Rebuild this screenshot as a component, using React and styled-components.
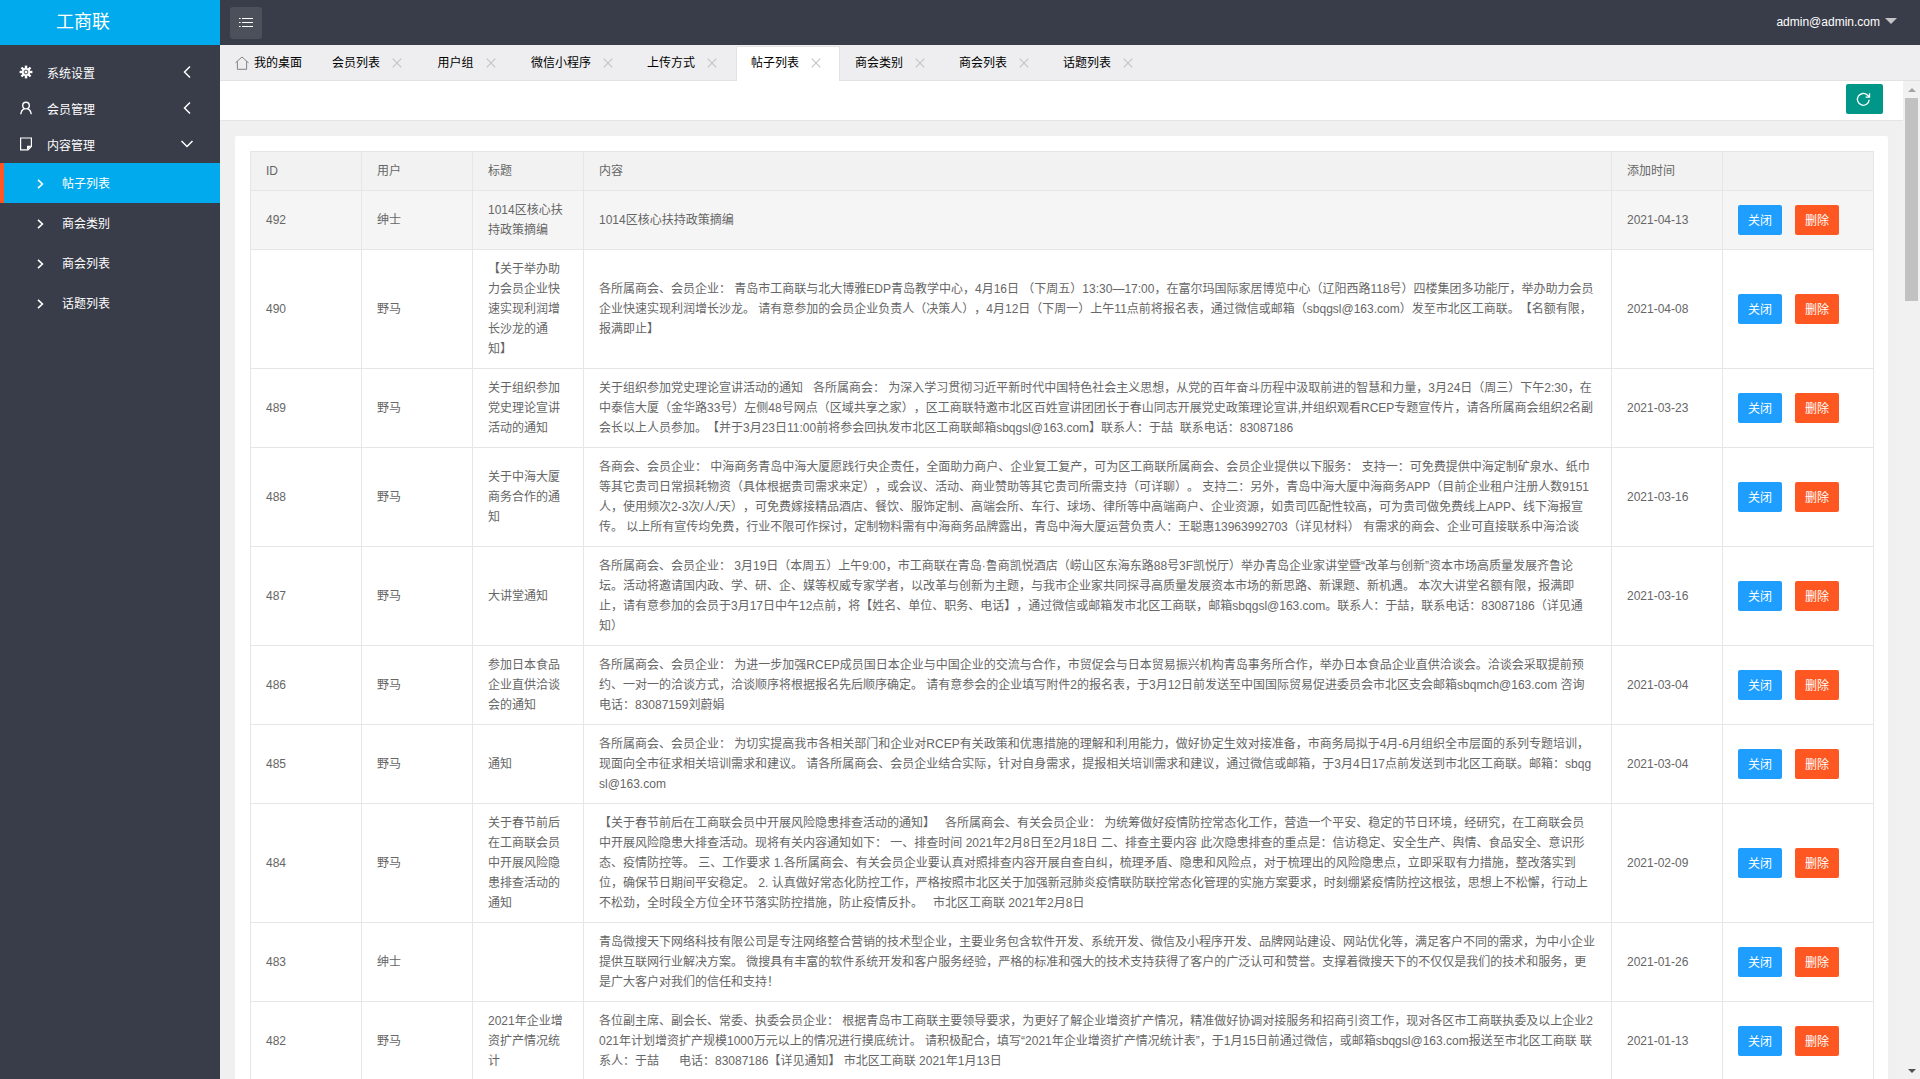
import React, { useState } from 'react';
import styled, { createGlobalStyle } from 'styled-components';

const GlobalStyle = createGlobalStyle`
  * {
    box-sizing: border-box;
  }

  body {
    margin: 0;
    overflow: hidden;
    font-family: "Liberation Sans", "Noto Sans CJK SC", sans-serif;
    font-size: 12px;
    line-height: 20px;
    color: #666;
    text-spacing-trim: space-all;
  }

  button {
    font-family: inherit;
    font-size: 12px;
    border: none;
    padding: 0;
    cursor: pointer;
  }

  a {
    color: inherit;
    text-decoration: none;
  }

  ul {
    list-style: none;
    margin: 0;
    padding: 0;
  }
`;

const Layout = styled.div`
  display: flex;
  height: 100vh;
`;

const Sidebar = styled.aside`
  flex: 0 0 220px;
  background: #393d49;
  color: #fff;
`;

const Logo = styled.a`
  display: block;
  height: 45px;
  line-height: 45px;
  padding-left: 56px;
  background: #01aaed;
  font-size: 18px;
`;

const Nav = styled.nav`
  padding-top: 10px;
`;

const NavItem = styled.button`
  display: flex;
  align-items: center;
  width: 100%;
  height: 36px;
  padding: 0 26px 2px 18px;
  background: none;
  color: #fff;
  text-align: left;

  span {
    flex: 1;
    margin-left: 13px;
  }
`;

const SubItem = styled.a`
  display: flex;
  align-items: center;
  height: 40px;
  padding: 2px 0 0 30px;
  border-left: 4px solid ${props => (props.$active ? '#ff5722' : 'transparent')};
  background: ${props => (props.$active ? '#01aaed' : 'transparent')};

  span {
    margin-left: 14px;
  }
`;

const Main = styled.div`
  flex: 1;
  min-width: 0;
  display: flex;
  flex-direction: column;
`;

const Header = styled.header`
  flex: 0 0 45px;
  display: flex;
  align-items: center;
  justify-content: space-between;
  padding: 0 23px 0 10px;
  background: #393d49;
`;

const ToggleButton = styled.button`
  display: flex;
  align-items: center;
  justify-content: center;
  width: 32px;
  height: 32px;
  border-radius: 3px;
  background: #4c505b;
`;

const UserButton = styled.button`
  display: flex;
  align-items: center;
  gap: 5px;
  padding-bottom: 2px;
  background: none;
  color: #fff;
`;

const Caret = styled.i`
  border: 6px solid transparent;
  border-top-color: #c4c5c8;
  border-bottom-width: 0;
  margin-bottom: 2px;
`;

const TabBar = styled.ul`
  flex: 0 0 36px;
  display: flex;
  background: #eeeef0;
  border-bottom: 1px solid #e2e2e2;
`;

const Tab = styled.li`
  display: flex;
  align-items: center;
  justify-content: center;
  min-width: 95px;
  height: 35px;
  margin: 1px 0 -1px;
  padding: 0 14px 2px;
  border: 1px solid ${props => (props.$active ? '#e2e2e2' : 'transparent')};
  border-bottom: none;
  border-radius: 2px 2px 0 0;
  background: ${props => (props.$active ? '#fff' : 'transparent')};
  color: #000;
`;

const TabLink = styled.a`
  display: flex;
  align-items: center;
  gap: 5px;
`;

const CloseButton = styled.button`
  display: flex;
  align-items: center;
  justify-content: center;
  width: 18px;
  height: 18px;
  margin-left: 8px;
  background: none;
`;

const Frame = styled.div`
  flex: 1;
  min-height: 0;
  display: flex;
`;

const Page = styled.div`
  flex: 1;
  min-width: 0;
  overflow: hidden;
  background: #f0f0f0;
`;

const Toolbar = styled.div`
  display: flex;
  justify-content: flex-end;
  height: 40px;
  padding: 3px 20px 0;
  background: #fff;
  border-bottom: 1px solid #e5e5e5;
`;

const RefreshButton = styled.button`
  display: flex;
  align-items: center;
  width: 37px;
  height: 30px;
  padding-left: 10px;
  border-radius: 2px;
  background: #009688;
`;

const Card = styled.section`
  margin: 15px;
  padding: 15px 14px 15px 15px;
  border-radius: 2px;
  background: #fff;
`;

const Table = styled.table`
  width: 100%;
  table-layout: fixed;
  border-collapse: collapse;

  th,
  td {
    padding: 9px 15px;
    border: 1px solid #e6e6e6;
    font-weight: 400;
    text-align: left;
    word-break: break-all;
    white-space: pre-wrap;
  }

  thead tr {
    background: #f2f2f2;
  }
`;

const Col = styled.col`
  width: ${props => props.$width || 'auto'};
`;

const Row = styled.tr`
  background: ${props => (props.$hover ? '#f5f5f5' : '#fff')};
`;

const Actions = styled.div`
  display: flex;
  gap: 13px;
  margin: -5px 0;
`;

const ActionButton = styled.button`
  width: 44px;
  height: 30px;
  padding-bottom: 2px;
  border-radius: 2px;
  background: ${props => (props.$danger ? '#ff5722' : '#1e9fff')};
  color: #fff;
`;

const ScrollBar = styled.div`
  flex: 0 0 17px;
  display: flex;
  flex-direction: column;
  align-items: center;
  background: #f1f1f1;
`;

const ScrollArrow = styled.span`
  display: flex;
  align-items: center;
  justify-content: center;
  width: 17px;
  height: 17px;

  i {
    border: 4px solid transparent;
    ${props =>
      props.$up
        ? 'border-top-width: 0; border-bottom-color: #a3a3a3;'
        : 'border-bottom-width: 0; border-top-color: #505050;'}
  }
`;

const ScrollTrack = styled.div`
  flex: 1;
`;

const ScrollThumb = styled.div`
  width: 13px;
  height: 203px;
  background: #c1c1c1;
`;

const Stroke = ({ d, size = 14, color = '#fff', width = 1.2 }) => (
  <svg width={size} height={size} viewBox="0 0 14 14" fill="none" stroke={color} strokeWidth={width} aria-hidden="true">
    <path d={d} />
  </svg>
);

const GearIcon = () => (
  <svg width="16" height="16" viewBox="0 0 16 16" aria-hidden="true">
    <g fill="#fff">
      <rect x="6.8" y="1.6" width="2.4" height="12.8" />
      <rect x="6.8" y="1.6" width="2.4" height="12.8" transform="rotate(45 8 8)" />
      <rect x="6.8" y="1.6" width="2.4" height="12.8" transform="rotate(90 8 8)" />
      <rect x="6.8" y="1.6" width="2.4" height="12.8" transform="rotate(135 8 8)" />
      <circle cx="8" cy="8" r="4.1" />
    </g>
    <circle cx="8" cy="8" r="1.9" fill="#fff" stroke="#393d49" strokeWidth="0.9" />
  </svg>
);

const UserIcon = () => (
  <svg width="16" height="16" viewBox="0 0 16 16" fill="none" stroke="#fff" strokeWidth="1.4" aria-hidden="true">
    <circle cx="8" cy="5.6" r="3.3" />
    <path d="M6.6 8.6C4.4 9.5 3 11.5 2.8 14.3M9.4 8.6c2.2.9 3.6 2.9 3.8 5.7" />
  </svg>
);

const NoteIcon = () => (
  <svg width="16" height="16" viewBox="0 0 16 16" aria-hidden="true">
    <path d="M2.6 2h10.8v8.6L10 13.9H2.6z" fill="none" stroke="#fff" strokeWidth="1.2" />
    <path d="M9 9.8h4.6L9 14.2z" fill="#fff" />
  </svg>
);

const ListIcon = () => (
  <svg width="16" height="16" viewBox="0 0 16 16" stroke="#fff" strokeWidth="1" aria-hidden="true">
    <path d="M1 3.5h1.6M4 3.5h11M1 7.5h1.6M4 7.5h11M1 11.5h1.6M4 11.5h11" />
  </svg>
);

const HomeIcon = () => (
  <Stroke d="M0.5 6.8 7 1l6.5 5.8M2.4 5.4v7.9h9.2V5.4" color="#777" width={0.9} />
);

const RefreshIcon = () => (
  <svg width="15" height="15" viewBox="0 0 15 15" fill="none" stroke="#fff" strokeWidth="1.3" aria-hidden="true">
    <path d="M13.2 7.8A5.9 5.9 0 1 1 11.6 3.3l1.6 1.5" />
    <path d="M13.5 1.2v3.9H9.6" />
  </svg>
);

const menus = [
  { label: '系统设置', icon: <GearIcon /> },
  { label: '会员管理', icon: <UserIcon /> },
  { label: '内容管理', icon: <NoteIcon />, open: true },
];

const subMenus = ['帖子列表', '商会类别', '商会列表', '话题列表'];

const tabs = ['会员列表', '用户组', '微信小程序', '上传方式', '帖子列表', '商会类别', '商会列表', '话题列表'];

const posts = [
  {
    id: 492,
    user: '绅士',
    title: '1014区核心扶持政策摘编',
    content: '1014区核心扶持政策摘编',
    date: '2021-04-13',
  },
  {
    id: 490,
    user: '野马',
    title: '【关于举办助力会员企业快速实现利润增长沙龙的通知】',
    content:
      '各所属商会、会员企业： 青岛市工商联与北大博雅EDP青岛教学中心，4月16日 （下周五）13:30—17:00，在富尔玛国际家居博览中心（辽阳西路118号）四楼集团多功能厅，举办助力会员企业快速实现利润增长沙龙。 请有意参加的会员企业负责人（决策人），4月12日（下周一）上午11点前将报名表，通过微信或邮箱（sbqgsl@163.com）发至市北区工商联。【名额有限，报满即止】',
    date: '2021-04-08',
  },
  {
    id: 489,
    user: '野马',
    title: '关于组织参加党史理论宣讲活动的通知',
    content:
      '关于组织参加党史理论宣讲活动的通知   各所属商会： 为深入学习贯彻习近平新时代中国特色社会主义思想，从党的百年奋斗历程中汲取前进的智慧和力量，3月24日（周三）下午2:30，在中泰信大厦（金华路33号）左侧48号网点（区域共享之家），区工商联特邀市北区百姓宣讲团团长于春山同志开展党史政策理论宣讲,并组织观看RCEP专题宣传片，请各所属商会组织2名副会长以上人员参加。【并于3月23日11:00前将参会回执发市北区工商联邮箱sbqgsl@163.com】联系人：于喆  联系电话：83087186',
    date: '2021-03-23',
  },
  {
    id: 488,
    user: '野马',
    title: '关于中海大厦商务合作的通知',
    content:
      '各商会、会员企业： 中海商务青岛中海大厦愿践行央企责任，全面助力商户、企业复工复产，可为区工商联所属商会、会员企业提供以下服务： 支持一：可免费提供中海定制矿泉水、纸巾等其它贵司日常损耗物资（具体根据贵司需求来定），或会议、活动、商业赞助等其它贵司所需支持（可详聊）。 支持二：另外，青岛中海大厦中海商务APP（目前企业租户注册人数9151人，使用频次2-3次/人/天），可免费嫁接精品酒店、餐饮、服饰定制、高端会所、车行、球场、律所等中高端商户、企业资源，如贵司匹配性较高，可为贵司做免费线上APP、线下海报宣传。 以上所有宣传均免费，行业不限可作探讨，定制物料需有中海商务品牌露出，青岛中海大厦运营负责人：王聪惠13963992703（详见材料） 有需求的商会、企业可直接联系中海洽谈',
    date: '2021-03-16',
  },
  {
    id: 487,
    user: '野马',
    title: '大讲堂通知',
    content:
      '各所属商会、会员企业： 3月19日（本周五）上午9:00，市工商联在青岛·鲁商凯悦酒店（崂山区东海东路88号3F凯悦厅）举办青岛企业家讲堂暨“改革与创新”资本市场高质量发展齐鲁论坛。活动将邀请国内政、学、研、企、媒等权威专家学者，以改革与创新为主题，与我市企业家共同探寻高质量发展资本市场的新思路、新课题、新机遇。 本次大讲堂名额有限，报满即止，请有意参加的会员于3月17日中午12点前，将【姓名、单位、职务、电话】，通过微信或邮箱发市北区工商联，邮箱sbqgsl@163.com。联系人：于喆，联系电话：83087186（详见通知）',
    date: '2021-03-16',
  },
  {
    id: 486,
    user: '野马',
    title: '参加日本食品企业直供洽谈会的通知',
    content:
      '各所属商会、会员企业： 为进一步加强RCEP成员国日本企业与中国企业的交流与合作，市贸促会与日本贸易振兴机构青岛事务所合作，举办日本食品企业直供洽谈会。洽谈会采取提前预约、一对一的洽谈方式，洽谈顺序将根据报名先后顺序确定。 请有意参会的企业填写附件2的报名表，于3月12日前发送至中国国际贸易促进委员会市北区支会邮箱sbqmch@163.com 咨询电话：83087159刘蔚娟',
    date: '2021-03-04',
  },
  {
    id: 485,
    user: '野马',
    title: '通知',
    content:
      '各所属商会、会员企业： 为切实提高我市各相关部门和企业对RCEP有关政策和优惠措施的理解和利用能力，做好协定生效对接准备，市商务局拟于4月-6月组织全市层面的系列专题培训，现面向全市征求相关培训需求和建议。 请各所属商会、会员企业结合实际，针对自身需求，提报相关培训需求和建议，通过微信或邮箱，于3月4日17点前发送到市北区工商联。邮箱：sbqgsl@163.com',
    date: '2021-03-04',
  },
  {
    id: 484,
    user: '野马',
    title: '关于春节前后在工商联会员中开展风险隐患排查活动的通知',
    content:
      '【关于春节前后在工商联会员中开展风险隐患排查活动的通知】   各所属商会、有关会员企业： 为统筹做好疫情防控常态化工作，营造一个平安、稳定的节日环境，经研究，在工商联会员中开展风险隐患大排查活动。现将有关内容通知如下： 一、排查时间 2021年2月8日至2月18日 二、排查主要内容 此次隐患排查的重点是：信访稳定、安全生产、舆情、食品安全、意识形态、疫情防控等。 三、工作要求 1.各所属商会、有关会员企业要认真对照排查内容开展自查自纠，梳理矛盾、隐患和风险点，对于梳理出的风险隐患点，立即采取有力措施，整改落实到位，确保节日期间平安稳定。 2. 认真做好常态化防控工作，严格按照市北区关于加强新冠肺炎疫情联防联控常态化管理的实施方案要求，时刻绷紧疫情防控这根弦，思想上不松懈，行动上不松劲，全时段全方位全环节落实防控措施，防止疫情反扑。   市北区工商联 2021年2月8日',
    date: '2021-02-09',
  },
  {
    id: 483,
    user: '绅士',
    title: '',
    content:
      '青岛微搜天下网络科技有限公司是专注网络整合营销的技术型企业，主要业务包含软件开发、系统开发、微信及小程序开发、品牌网站建设、网站优化等，满足客户不同的需求，为中小企业提供互联网行业解决方案。 微搜具有丰富的软件系统开发和客户服务经验，严格的标准和强大的技术支持获得了客户的广泛认可和赞誉。支撑着微搜天下的不仅仅是我们的技术和服务，更是广大客户对我们的信任和支持！',
    date: '2021-01-26',
  },
  {
    id: 482,
    user: '野马',
    title: '2021年企业增资扩产情况统计',
    content:
      '各位副主席、副会长、常委、执委会员企业： 根据青岛市工商联主要领导要求，为更好了解企业增资扩产情况，精准做好协调对接服务和招商引资工作，现对各区市工商联执委及以上企业2021年计划增资扩产规模1000万元以上的情况进行摸底统计。 请积极配合，填写“2021年企业增资扩产情况统计表”，于1月15日前通过微信，或邮箱sbqgsl@163.com报送至市北区工商联 联系人：于喆      电话：83087186【详见通知】 市北区工商联 2021年1月13日',
    date: '2021-01-13',
  },
];

const App = () => {
  const [current, setCurrent] = useState('帖子列表');

  return (
    <Layout lang="zh-CN">
      <GlobalStyle />
      <Sidebar>
        <Logo href="#">工商联</Logo>
        <Nav>
          {menus.map((menu) => (
            <NavItem key={menu.label} type="button">
              {menu.icon}
              <span>{menu.label}</span>
              {menu.open
                ? <Stroke d="M1.5 4 7 9.5 12.5 4" width={1.5} />
                : <Stroke d="M10 1.5 4.5 7l5.5 5.5" width={1.5} />}
            </NavItem>
          ))}
          {subMenus.map((label) => (
            <SubItem key={label} href="#" $active={label === current} onClick={() => setCurrent(label)}>
              <Stroke d="M4 2.8 8.4 7 4 11.2" size={14} width={1.6} />
              <span>{label}</span>
            </SubItem>
          ))}
        </Nav>
      </Sidebar>

      <Main>
        <Header>
          <ToggleButton type="button" aria-label="展开菜单">
            <ListIcon />
          </ToggleButton>
          <UserButton type="button">
            admin@admin.com
            <Caret />
          </UserButton>
        </Header>

        <TabBar>
          <Tab>
            <TabLink href="#">
              <HomeIcon />
              我的桌面
            </TabLink>
          </Tab>
          {tabs.map((label) => (
            <Tab key={label} $active={label === current}>
              <TabLink href="#" onClick={() => setCurrent(label)}>{label}</TabLink>
              <CloseButton type="button" aria-label="关闭标签">
                <Stroke d="M2 2l10 10M12 2 2 12" size={12} color="#c2c2c2" />
              </CloseButton>
            </Tab>
          ))}
        </TabBar>

        <Frame>
          <Page>
            <Toolbar>
              <RefreshButton type="button" aria-label="刷新">
                <RefreshIcon />
              </RefreshButton>
            </Toolbar>
            <Card>
              <Table>
                <colgroup>
                  <Col $width="111px" />
                  <Col $width="111px" />
                  <Col $width="111px" />
                  <Col />
                  <Col $width="111px" />
                  <Col $width="151px" />
                </colgroup>
                <thead>
                  <tr>
                    <th>ID</th>
                    <th>用户</th>
                    <th>标题</th>
                    <th>内容</th>
                    <th>添加时间</th>
                    <th></th>
                  </tr>
                </thead>
                <tbody>
                  {posts.map((post, index) => (
                    <Row key={post.id} $hover={index === 0}>
                      <td>{post.id}</td>
                      <td>{post.user}</td>
                      <td>{post.title}</td>
                      <td>{post.content}</td>
                      <td>{post.date}</td>
                      <td>
                        <Actions>
                          <ActionButton type="button">关闭</ActionButton>
                          <ActionButton type="button" $danger>删除</ActionButton>
                        </Actions>
                      </td>
                    </Row>
                  ))}
                </tbody>
              </Table>
            </Card>
          </Page>
          <ScrollBar>
            <ScrollArrow $up><i /></ScrollArrow>
            <ScrollTrack>
              <ScrollThumb />
            </ScrollTrack>
            <ScrollArrow><i /></ScrollArrow>
          </ScrollBar>
        </Frame>
      </Main>
    </Layout>
  );
};

export default App;
